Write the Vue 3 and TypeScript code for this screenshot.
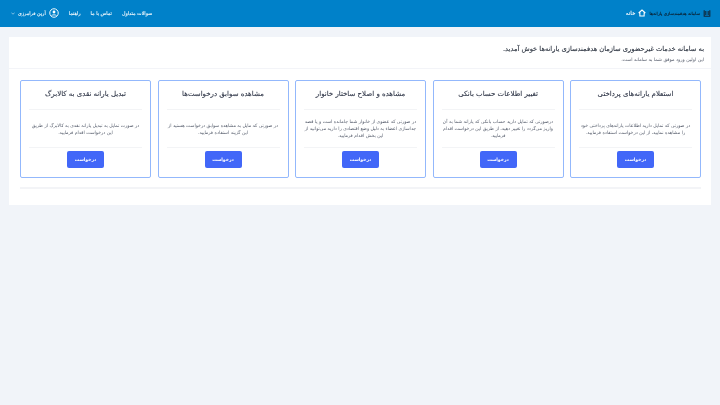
<script setup lang="ts">
const cards = [
  { title: 'استعلام یارانه‌های پرداختی', text: 'در صورتی که تمایل دارید اطلاعات یارانه‌های پرداختی خود را مشاهده نمایید، از این درخواست استفاده فرمایید.' },
  { title: 'تغییر اطلاعات حساب بانکی', text: 'درصورتی که تمایل دارید حساب بانکی که یارانه شما به آن واریز می‌گردد را تغییر دهید، از طریق این درخواست اقدام فرمایید.' },
  { title: 'مشاهده و اصلاح ساختار خانوار', text: 'در صورتی که عضوی از خانوار شما جامانده است و یا قصد جداسازی اعضاء به دلیل وضع اقتصادی را دارید می‌توانید از این بخش اقدام فرمایید.' },
  { title: 'مشاهده سوابق درخواست‌ها', text: 'در صورتی که مایل به مشاهده سوابق درخواست هستید از این گزینه استفاده فرمایید.' },
  { title: 'تبدیل یارانه نقدی به کالابرگ', text: 'در صورت تمایل به تبدیل یارانه نقدی به کالابرگ از طریق این درخواست اقدام فرمایید.' },
]
</script>

<template>
  <div class="page" dir="rtl">
    <header class="topbar">
      <div class="nav-start">
        <svg class="emblem" viewBox="0 0 10 10" width="8" height="9">
          <path d="M1.5 1v7.5h7V1M3.5 2v5M6.5 2v5" fill="none" stroke="#10293c" stroke-width="1.4" />
        </svg>
        <span class="logo">سامانه هدفمندسازی یارانه‌ها</span>
        <svg class="home" viewBox="0 0 12 12" width="8" height="8">
          <path d="M1 6 6 1.5 11 6M2.8 5v5.5h6.4V5" fill="none" stroke="#fff" stroke-width="1.6" />
        </svg>
        <span class="nav-link home-link">خانه</span>
      </div>
      <nav class="nav-end">
        <span class="nav-link">سوالات متداول</span>
        <span class="nav-link">تماس با ما</span>
        <span class="nav-link">راهنما</span>
        <span class="user">
          <svg viewBox="0 0 16 16" width="10" height="10">
            <circle cx="8" cy="8" r="6.8" fill="none" stroke="#fff" stroke-width="1.5" />
            <circle cx="8" cy="6.4" r="2.3" fill="#fff" />
            <path d="M4 12.4c1-2 7-2 8 0" fill="none" stroke="#fff" stroke-width="1.4" />
          </svg>
          <span class="nav-link">آرین فرامرزی</span>
          <svg viewBox="0 0 8 5" width="4" height="3">
            <path d="M.7.7 4 4 7.3.7" fill="none" stroke="#fff" stroke-width="1" />
          </svg>
        </span>
      </nav>
    </header>

    <main class="panel">
      <section class="welcome">
        <h1>به سامانه خدمات غیرحضوری سازمان هدفمندسازی یارانه‌ها خوش آمدید.</h1>
        <p>این اولین ورود موفق شما به سامانه است.</p>
      </section>
      <section class="cards">
        <article v-for="card in cards" :key="card.title" class="card">
          <h2>{{ card.title }}</h2>
          <p>{{ card.text }}</p>
          <div class="action"><button type="button">درخواست</button></div>
        </article>
      </section>
    </main>
  </div>
</template>

<style scoped>
.page {
  min-height: 405px;
  background: #f1f4f9;
  font-family: "DejaVu Sans", "Noto Sans", sans-serif;
  color: #3f4254;
}
.topbar {
  height: 27px;
  box-sizing: border-box;
  background: #0081c9;
  display: flex;
  align-items: center;
  justify-content: space-between;
  padding: 0 9px 1px 11px;
  color: #fff;
}
.nav-start,
.nav-end {
  filter: blur(0.2px);
}
.nav-start,
.nav-end,
.user {
  display: flex;
  align-items: center;
}
.nav-start {
  gap: 3px;
}
.nav-end {
  gap: 10px;
}
.user {
  gap: 3px;
}
.logo {
  font-size: 4.3px;
  color: #0b2131;
  -webkit-text-stroke: 0.15px #0b2131;
  white-space: nowrap;
}
.nav-link {
  font-size: 4.8px;
  white-space: nowrap;
  -webkit-text-stroke: 0.1px #fff;
}
.home-link {
  font-size: 5.6px;
}
.panel {
  margin: 10px 9px 0;
  background: #fff;
  padding: 0 10px 16px 11px;
}
.welcome,
.cards {
  filter: blur(0.2px);
}
.welcome {
  height: 32px;
  padding: 7px 7px 0 0;
  box-sizing: border-box;
  border-bottom: 1px solid #f3f4f8;
  margin: 0 -10px 0 -11px;
}
.welcome h1 {
  margin: 0;
  font-size: 6.7px;
  font-weight: 400;
  line-height: 10px;
  color: #252d3a;
  -webkit-text-stroke: 0.1px #252d3a;
}
.welcome p {
  margin: 2px 0 0;
  font-size: 4.7px;
  line-height: 7px;
  color: #565d6c;
}
.cards {
  display: grid;
  grid-template-columns: repeat(5, 1fr);
  gap: 6.5px;
  margin-top: 11px;
  padding-bottom: 9px;
  border-bottom: 2px solid #f3f4f7;
}
.card {
  height: 98px;
  box-sizing: border-box;
  border: 1px solid #93b8fc;
  border-radius: 2px;
  padding: 0 8px;
  display: flex;
  flex-direction: column;
  text-align: center;
}
.card h2 {
  height: 28px;
  margin: 0;
  border-bottom: 1px solid #f3f4f6;
  font-size: 7px;
  font-weight: 400;
  line-height: 27px;
  color: #2b3244;
  -webkit-text-stroke: 0.1px #2b3244;
  white-space: nowrap;
}
.card p {
  flex: 1;
  margin: 0;
  display: flex;
  align-items: center;
  justify-content: center;
  border-bottom: 1px solid #f3f4f6;
  font-size: 4.6px;
  line-height: 7px;
  color: #555c6b;
}
.action {
  height: 29px;
  display: flex;
  align-items: flex-start;
  justify-content: center;
  padding-top: 3px;
  box-sizing: border-box;
}
.action button {
  width: 37px;
  height: 17px;
  border: 0;
  border-radius: 2px;
  background: #4267f8;
  color: #fff;
  font: 700 4.5px "DejaVu Sans", sans-serif;
}
</style>

<style>
html,
body {
  margin: 0;
  background: #f1f4f9;
}
</style>
